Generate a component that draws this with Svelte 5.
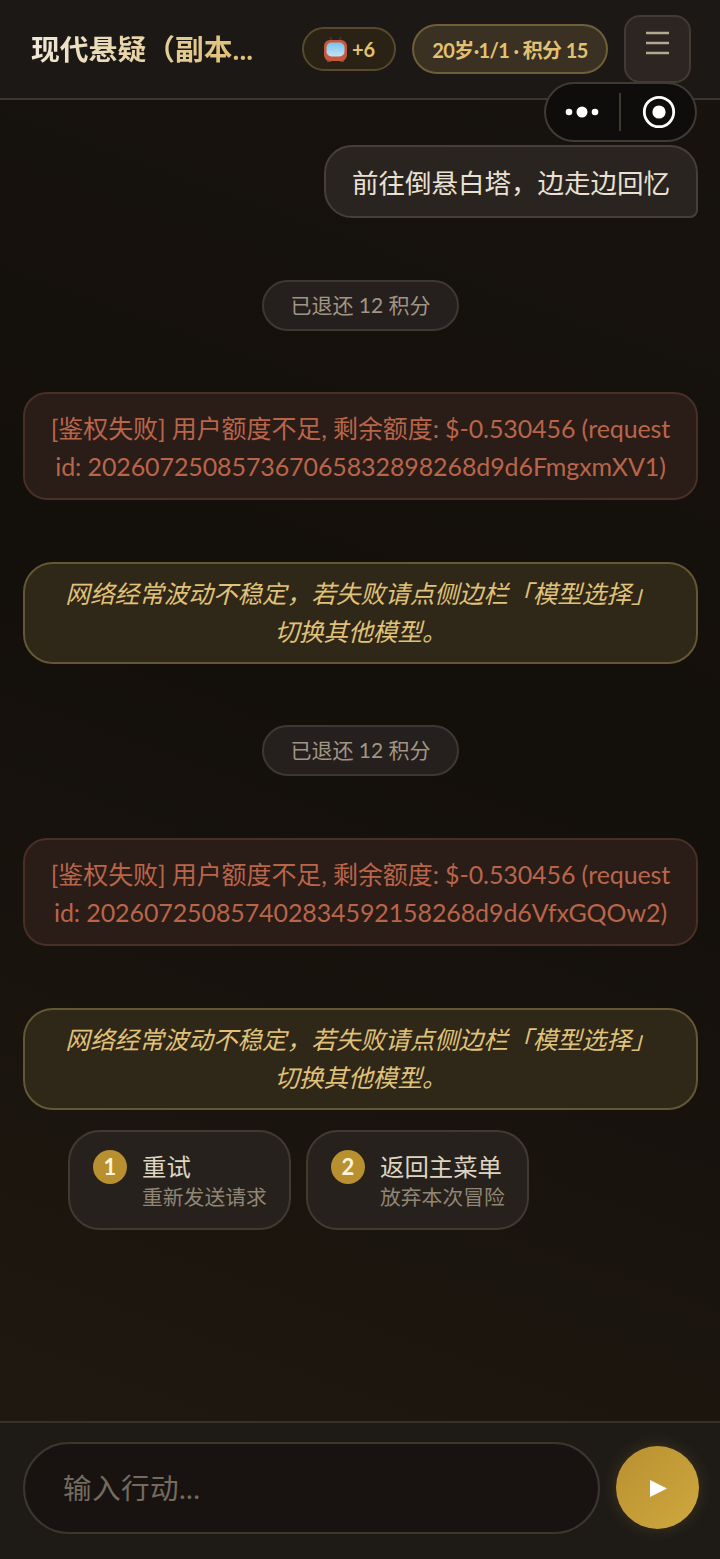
<script lang="ts">
  const digits = [
    { kind: 'pill', text: '已退还 12 积分' },
    { kind: 'error', text: '[鉴权失败] 用户额度不足, 剩余额度: $-0.530456 (request id: 202607250857367065832898268d9d6FmgxmXV1)' },
    { kind: 'notice', text: '网络经常波动不稳定，若失败请点侧边栏「模型选择」切换其他模型。' },
    { kind: 'pill', text: '已退还 12 积分' },
    { kind: 'error', text: '[鉴权失败] 用户额度不足, 剩余额度: $-0.530456 (request id: 202607250857402834592158268d9d6VfxGQOw2)' },
    { kind: 'notice', text: '网络经常波动不稳定，若失败请点侧边栏「模型选择」切换其他模型。' }
  ];

  const choices = [
    { n: 1, title: '重试', sub: '重新发送请求' },
    { n: 2, title: '返回主菜单', sub: '放弃本次冒险' }
  ];
</script>

<div class="page">
  <header class="top">
    <h1 class="title">现代悬疑（副本...</h1>
    <div class="badge tv">
      <svg width="25" height="27" viewBox="0 0 25 27">
        <defs>
          <linearGradient id="screen" x1="0" y1="0" x2="0" y2="1">
            <stop offset="0" stop-color="#7cc2ee" />
            <stop offset="1" stop-color="#bfe4f6" />
          </linearGradient>
        </defs>
        <path d="M9 5 7 1M16 5l2-4" stroke="#4a3a30" stroke-width="1.5" />
        <rect x="4" y="23" width="4" height="3" fill="#8e3a24" />
        <rect x="17" y="23" width="4" height="3" fill="#8e3a24" />
        <rect x="1" y="4" width="23" height="21" rx="6" fill="#c9573c" />
        <rect x="3.5" y="6.5" width="18" height="14" rx="5" fill="url(#screen)" />
      </svg>
      <span>+6</span>
    </div>
    <div class="badge stats">20岁·1/1 · 积分 15</div>
    <button class="menu" aria-label="菜单">
      <svg width="23" height="24" viewBox="0 0 23 24">
        <path d="M0 2h23M0 12h23M0 22h23" stroke="#b5a893" stroke-width="2.6" />
      </svg>
    </button>
  </header>

  <div class="capsule">
    <svg class="dots" width="38" height="14" viewBox="0 0 38 14">
      <circle cx="6" cy="7" r="3.3" fill="#fff" />
      <circle cx="19" cy="7" r="5.5" fill="#fff" />
      <circle cx="32" cy="7" r="3.3" fill="#fff" />
    </svg>
    <i class="sep"></i>
    <svg class="target" width="34" height="34" viewBox="0 0 34 34">
      <circle cx="17" cy="17" r="14.7" fill="none" stroke="#fff" stroke-width="2.8" />
      <circle cx="17" cy="17" r="6.6" fill="#fff" />
    </svg>
  </div>

  <main class="log">
    <div class="user">前往倒悬白塔，边走边回忆</div>
    {#each digits as m}
      <div class={m.kind}>{m.text}</div>
    {/each}
    <div class="choices">
      {#each choices as c}
        <button class="choice">
          <span class="num">{c.n}</span>
          <span class="body">
            <span class="c-title">{c.title}</span>
            <span class="c-sub">{c.sub}</span>
          </span>
        </button>
      {/each}
    </div>
  </main>

  <footer class="bottom">
    <div class="input">输入行动...</div>
    <button class="send" aria-label="发送">
      <svg width="17" height="17" viewBox="0 0 17 17"><path d="M0 0 17 8.5 0 17Z" fill="#fff" /></svg>
    </button>
  </footer>
</div>

<style>
  :global(body) {
    margin: 0;
    background: #14100c;
  }

  .page {
    position: relative;
    width: 720px;
    height: 1559px;
    display: flex;
    flex-direction: column;
    overflow: hidden;
    font-family: "Lato", "Noto Sans CJK SC", sans-serif;
    background: linear-gradient(200deg, #18130f 0%, #130f0b 45%, #1f1810 92%);
  }

  .top {
    height: 100px;
    box-sizing: border-box;
    display: flex;
    align-items: flex-start;
    padding: 15px 29px 0 31px;
    background: #1b1815;
    border-bottom: 2px solid #3b352c;
    flex-shrink: 0;
  }

  .title {
    width: 271px;
    margin: 16px 0 0;
    font-size: 28.8px;
    line-height: 36px;
    font-weight: 700;
    white-space: nowrap;
    color: #e3cc8e;
    background: linear-gradient(90deg, #f0e8d8, #dfc078 75%);
    -webkit-background-clip: text;
    background-clip: text;
    -webkit-text-fill-color: transparent;
  }

  .badge {
    box-sizing: border-box;
    display: flex;
    align-items: center;
    justify-content: center;
    border-radius: 999px;
    color: #e3c173;
    font-weight: 700;
  }

  .tv {
    width: 94px;
    height: 44px;
    margin: 12px 16px 0 0;
    gap: 4px;
    font-size: 20px;
    background: #2a2214;
    border: 2px solid #574a2c;
  }

  .stats {
    width: 196px;
    height: 50px;
    margin: 9px 16px 0 0;
    font-size: 20px;
    letter-spacing: -0.6px;
    white-space: nowrap;
    background: #3a3122;
    border: 2px solid #6e5f39;
  }

  .menu {
    width: 67px;
    height: 68px;
    padding: 0 0 10px;
    background: #2c2521;
    border: 2px solid #423a33;
    border-radius: 16px;
  }

  .capsule {
    position: absolute;
    top: 82px;
    left: 544px;
    width: 153px;
    height: 60px;
    box-sizing: border-box;
    display: flex;
    align-items: center;
    background: #0f0d0b;
    border: 2px solid #403a33;
    border-radius: 30px;
  }

  .dots {
    margin-left: 17px;
  }

  .sep {
    width: 1.5px;
    height: 38px;
    margin: 0 21px 0 18px;
    background: #3d3832;
  }

  .log {
    flex: 1;
    display: flex;
    flex-direction: column;
    align-items: center;
    gap: 61.6px;
    padding: 45px 22px 0 23px;
  }

  .user {
    align-self: flex-end;
    box-sizing: border-box;
    height: 73px;
    padding: 0 26px;
    line-height: 73px;
    font-size: 26.5px;
    color: #e9e1d3;
    background: #2a2421;
    border: 2px solid #463f38;
    border-radius: 28px 28px 8px 28px;
  }

  .pill {
    box-sizing: border-box;
    width: 197px;
    height: 51px;
    line-height: 45px;
    text-align: center;
    font-size: 21px;
    color: #a09685;
    background: #25201d;
    border: 2px solid #3e3833;
    border-radius: 26px;
  }

  .error,
  .notice {
    box-sizing: border-box;
    width: 100%;
    text-align: center;
  }

  .error {
    height: 108px;
    padding: 15px 20px;
    font-size: 25px;
    letter-spacing: -0.1px;
    line-height: 38px;
    color: #b9654a;
    background: #2a1c17;
    border: 2px solid #4a2f26;
    border-radius: 24px;
  }

  .notice {
    height: 102px;
    padding: 11px 38px;
    font-size: 24.6px;
    line-height: 38.4px;
    font-style: italic;
    color: #e0c27a;
    background: #2f2818;
    border: 2px solid #645734;
    border-radius: 30px;
  }

  .choices {
    display: flex;
    gap: 15px;
    align-self: flex-start;
    margin: -41px 0 0 45px;
  }

  .choice {
    box-sizing: border-box;
    width: 223px;
    height: 100px;
    display: flex;
    align-items: flex-start;
    gap: 15px;
    padding: 19px 0 0 23px;
    font-family: inherit;
    text-align: left;
    background: #26211d;
    border: 2px solid #413a33;
    border-radius: 32px;
  }

  .num {
    width: 34px;
    height: 34px;
    margin-top: -1px;
    flex-shrink: 0;
    border-radius: 50%;
    text-align: center;
    line-height: 34px;
    font-size: 22px;
    font-weight: 700;
    color: #fff4dc;
    background: #b8902f;
  }

  .body {
    display: flex;
    flex-direction: column;
  }

  .c-title {
    font-size: 24.4px;
    line-height: 32px;
    color: #dfd4c0;
  }

  .c-sub {
    font-size: 20.8px;
    line-height: 28px;
    color: #918674;
  }

  .bottom {
    height: 138px;
    box-sizing: border-box;
    display: flex;
    gap: 16px;
    padding: 19px 21px 0 23px;
    background: #1e1b17;
    border-top: 2px solid #37312a;
    flex-shrink: 0;
  }

  .input {
    box-sizing: border-box;
    width: 577px;
    height: 92px;
    padding-left: 38px;
    line-height: 88px;
    font-size: 28.6px;
    letter-spacing: 0.4px;
    color: #746b5f;
    background: #181311;
    border: 2px solid #3c3630;
    border-radius: 46px;
  }

  .send {
    width: 83px;
    height: 83px;
    margin-top: 4px;
    padding: 4px 0 0 2px;
    border: none;
    border-radius: 50%;
    background: linear-gradient(135deg, #b8902f, #d0a840);
    box-shadow: 0 0 16px rgba(200, 160, 60, 0.2);
  }
</style>
